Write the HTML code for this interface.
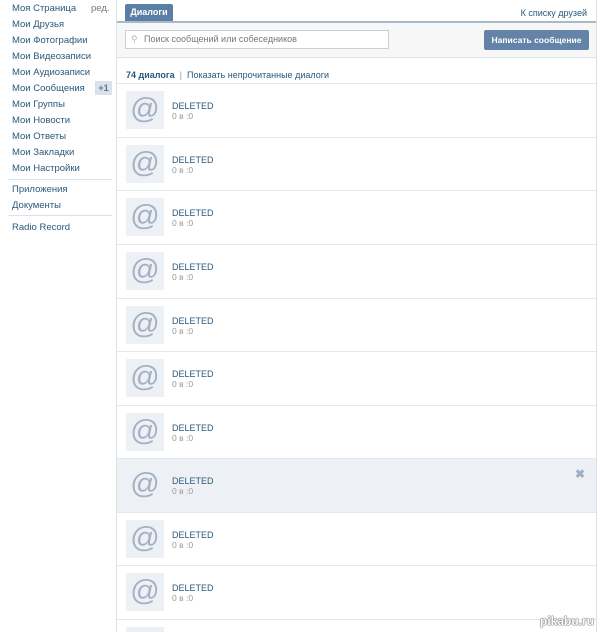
<!DOCTYPE html>
<html><head><meta charset="utf-8"><style>
*{margin:0;padding:0;box-sizing:border-box}
html,body{width:600px;height:632px;overflow:hidden}
body{background:#fff;font-family:"Liberation Sans",sans-serif;font-size:9.5px;color:#2b587a;position:relative;white-space:nowrap}
.l{position:absolute;left:12px;line-height:12px}
.sep{position:absolute;left:8px;width:104px;height:1px;background:#dae1e8}
#main{position:absolute;left:116px;top:0;width:481px;height:632px;border-left:1px solid #dae1e8;border-right:1px solid #dae1e8;overflow:hidden}
.row{position:absolute;left:0;width:479px;height:54px;border-top:1px solid #e4e8ed}
.av{position:absolute;left:9px;top:7px;width:38px;height:38px;background:#edf0f4;color:#a3b1c5;font-size:29px;text-align:center;line-height:36px;font-family:"Liberation Sans",sans-serif}
.nm{position:absolute;left:55px;top:17px;color:#2b587a;font-size:9px}
.sub{position:absolute;left:55px;top:27px;color:#999;font-size:8.5px}
</style></head><body>
<div class="l" style="top:3px">Моя Страница</div><div class="l" style="top:3px;left:91px;color:#777">ред.</div>
<div class="l" style="top:19px">Мои Друзья</div>
<div class="l" style="top:35px">Мои Фотографии</div>
<div class="l" style="top:51px">Мои Видеозаписи</div>
<div class="l" style="top:67px">Мои Аудиозаписи</div>
<div class="l" style="top:83px">Мои Сообщения</div>
<div style="position:absolute;left:95px;top:81px;width:17px;height:14px;background:#dae1e8;color:#5b7394;font-weight:bold;font-size:9px;text-align:center;line-height:14px">+1</div>
<div class="l" style="top:99px">Мои Группы</div>
<div class="l" style="top:115px">Мои Новости</div>
<div class="l" style="top:131px">Мои Ответы</div>
<div class="l" style="top:147px">Мои Закладки</div>
<div class="l" style="top:163px">Мои Настройки</div>
<div class="sep" style="top:179px"></div>
<div class="l" style="top:184px">Приложения</div>
<div class="l" style="top:200px">Документы</div>
<div class="sep" style="top:215px"></div>
<div class="l" style="top:222px">Radio Record</div>
<div id="main">
<div style="position:absolute;left:8px;top:4px;width:48px;height:18px;background:#5b7ea4;border-radius:2px 2px 0 0;color:#fff;font-weight:bold;font-size:9px;text-align:center;line-height:17px">Диалоги</div>
<div style="position:absolute;right:9px;top:8px;font-size:9px">К списку друзей</div>
<div style="position:absolute;left:0;top:21px;width:479px;height:2px;background:#a8b9cc"></div>
<div style="position:absolute;left:0;top:23px;width:479px;height:35px;background:#f7f7f7;border-bottom:1px solid #dde3e9"></div>
<div style="position:absolute;left:8px;top:30px;width:264px;height:19px;background:#fff;border:1px solid #c5d0db;color:#777;font-size:9px;line-height:17px;padding-left:18px">Поиск сообщений или собеседников<span style="position:absolute;left:5px;top:0;color:#b0b8c0">⚲</span></div>
<div style="position:absolute;left:367px;top:30px;width:105px;height:20px;background:#6383a8;border-radius:2px;color:#fff;font-weight:bold;font-size:8.5px;text-align:center;line-height:20px">Написать сообщение</div>
<div style="position:absolute;left:9px;top:70px;font-size:9px"><b>74 диалога</b> <span style="color:#999">&nbsp;|&nbsp;</span> Показать непрочитанные диалоги</div>
<div class="row" style="top:83px"><div class="av">@</div><div class="nm">DELETED</div><div class="sub">0 в :0</div></div>
<div class="row" style="top:137px"><div class="av">@</div><div class="nm">DELETED</div><div class="sub">0 в :0</div></div>
<div class="row" style="top:190px"><div class="av">@</div><div class="nm">DELETED</div><div class="sub">0 в :0</div></div>
<div class="row" style="top:244px"><div class="av">@</div><div class="nm">DELETED</div><div class="sub">0 в :0</div></div>
<div class="row" style="top:298px"><div class="av">@</div><div class="nm">DELETED</div><div class="sub">0 в :0</div></div>
<div class="row" style="top:351px"><div class="av">@</div><div class="nm">DELETED</div><div class="sub">0 в :0</div></div>
<div class="row" style="top:405px"><div class="av">@</div><div class="nm">DELETED</div><div class="sub">0 в :0</div></div>
<div class="row" style="top:458px;background:#edf1f5"><div class="av">@</div><div class="nm">DELETED</div><div class="sub">0 в :0</div><div style="position:absolute;right:11px;top:8px;color:#9eb0c5;font-weight:bold;font-size:12px">✖</div></div>
<div class="row" style="top:512px"><div class="av">@</div><div class="nm">DELETED</div><div class="sub">0 в :0</div></div>
<div class="row" style="top:565px"><div class="av">@</div><div class="nm">DELETED</div><div class="sub">0 в :0</div></div>
<div class="row" style="top:619px;height:13px;overflow:hidden"><div class="av">@</div></div>
</div>
<div style="position:absolute;left:540px;top:614px;font-size:12px;color:#fff;font-weight:bold;text-shadow:0 0 1px #555,0 0 1px #555,0 0 1px #555">pikabu.ru</div>
</body></html>
